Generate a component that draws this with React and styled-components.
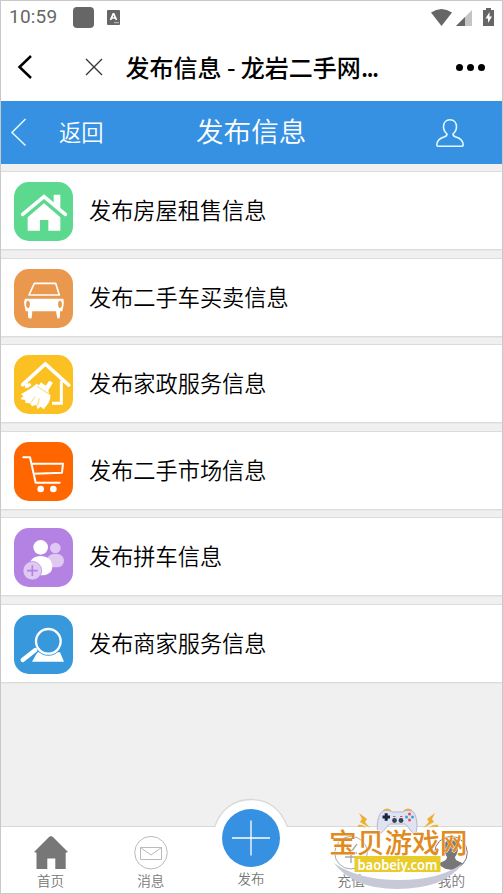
import React from "react";
import styled, { createGlobalStyle } from "styled-components";

const GlobalStyle = createGlobalStyle`
  * { box-sizing: border-box; }
  body {
    margin: 0;
    font-family: "Noto Sans CJK SC", sans-serif;
  }
  svg { display: block; flex: none; overflow: visible; }
`;

const Phone = styled.div`
  position: relative;
  display: flex;
  flex-direction: column;
  width: 503px;
  height: 894px;
  border: 1px solid #c9c9c9;
  background: #f0f0f0;
  overflow: hidden;
`;

const StatusBar = styled.div`
  display: flex;
  align-items: center;
  height: 32px;
  padding: 0 8px 0 8px;
  background: #fff;
  color: #666;
`;

const Clock = styled.span`
  width: 64px;
  font: 19px/32px Roboto, sans-serif;
  letter-spacing: 0.2px;
`;

const NoticeBlock = styled.span`
  width: 21px;
  height: 21px;
  margin-right: 13px;
  border-radius: 4px;
  background: #666;
`;

const StatusRight = styled.div`
  display: flex;
  align-items: center;
  margin-left: auto;
`;

const BrowserBar = styled.div`
  display: flex;
  align-items: center;
  height: 68px;
  padding: 1px 17px 1px 16px;
  background: #fff;
`;

const PageTitle = styled.div`
  width: 270px;
  margin-left: 23.5px;
  font-size: 24px;
  line-height: 66px;
  font-weight: 500;
  color: #000;
  white-space: nowrap;
`;

const Ellipsis = styled.span`
  letter-spacing: -1.6px;
`;

const Dots = styled.div`
  display: flex;
  gap: 4px;
  margin-left: auto;
`;

const Dot = styled.i`
  width: 7px;
  height: 7px;
  border-radius: 50%;
  background: #000;
`;

const Header = styled.header`
  display: grid;
  grid-template-columns: 58px 137px 1fr 66px;
  align-items: center;
  height: 63px;
  background: #3691e2;
  color: #fff;
`;

const Back = styled.span`
  padding-bottom: 4px;
  font-size: 22.3px;
  font-weight: 350;
`;

const HeaderTitle = styled.h1`
  margin: 0;
  padding-bottom: 4px;
  font-size: 27.6px;
  line-height: 59px;
  font-weight: 350;
`;

const List = styled.main`
  display: flex;
  flex-direction: column;
  gap: 7.6px;
  padding-top: 7px;
  flex: 1;
`;

const Row = styled.div`
  display: flex;
  align-items: flex-start;
  height: 79px;
  padding-left: 13px;
  border: solid #dcdcdc;
  border-width: 1px 0;
  box-shadow: 0 1px #e8e8e8;
  background: #fff;
`;

const RowIcon = styled.div`
  width: 59px;
  height: 59px;
  margin: 10px 16px 0 0;
  border-radius: 15px;
  background: ${(props) => props.$color};
`;

const RowText = styled.span`
  margin-top: 8px;
  font-size: 22.2px;
  line-height: 59px;
  font-weight: 350;
  color: #000;
`;

const TabBar = styled.nav`
  display: grid;
  grid-template-columns: repeat(5, 1fr);
  height: 67px;
  border-top: 1px solid #d8d8d8;
  background: #fff;
`;

const Tab = styled.div`
  display: flex;
  flex-direction: column;
  align-items: center;
  padding: 9px 1px 0 0;
`;

const TabText = styled.span`
  margin-top: ${(props) => props.$top || "0"};
  font-size: 13.6px;
  line-height: 20px;
  font-weight: 350;
  color: #777;
`;

const Publish = styled.div`
  margin-top: -37px;
  height: 70px;
`;

const Watermark = styled.svg`
  position: absolute;
  left: 319px;
  top: 799px;
`;

const HouseIcon = () => (
  <svg width="59" height="59" viewBox="0 0 177 177" fill="#fff">
    <path d="M119 38h20v43l-20-17z" />
    <path d="M26 97 90 44l64 53" fill="none" stroke="#fff" strokeWidth="11" strokeLinecap="round" />
    <path d="M41 146v-40l49-42 49 42v40h-36v-32H78v32z" />
  </svg>
);

const CarIcon = () => (
  <svg width="59" height="59" viewBox="0 0 177 177" fill="#fff">
    <path d="M61 43h64l11 35H45z" fill="none" stroke="#fff" strokeWidth="5" strokeLinejoin="round" />
    <path d="M33 89h115q2 8 1 18l-4 20h-7v17q-2 6-8 4l-4-21H55l-2 20q-6 4-11-2v-18h-7l-4-20q-2-10 2-18z" />
    <ellipse cx="42" cy="106" rx="5.5" ry="11" fill="#ea984e" />
    <ellipse cx="138" cy="106" rx="5.5" ry="11" fill="#ea984e" />
  </svg>
);

const CleanIcon = () => (
  <svg width="59" height="59" viewBox="0 0 177 177" fill="#fff">
    <path d="M26 89 94 27l70 63" fill="none" stroke="#fff" strokeWidth="11" strokeLinecap="round" />
    <path d="M37 80v18M37 96l13-9M142 77v68h-28" fill="none" stroke="#fff" strokeWidth="9" />
    <path d="m106 77 11 6-14 23 3 14q-11-10-20-12l-17-9 12-17 14 10z" />
    <path d="M68 86q-18 16-47 31l7 7-9 8 14 3 2 9 13 1 6 9 13-5 3 13 10-7 9 8 10-13q11-14 10-29L91 101z" />
    <path d="m69 94 36 23M63 125l-12 18M76 130l-5 22" fill="none" stroke="#fbc123" strokeWidth="2" />
  </svg>
);

const CartIcon = () => (
  <svg width="59" height="59" viewBox="0 0 177 177" fill="none" stroke="#fff" strokeWidth="6">
    <path d="M28 46h20l17 76h72M54 65h93l-3 27-84 3" strokeLinecap="round" strokeLinejoin="round" />
    <circle cx="80" cy="141" r="10" fill="#fff" stroke="none" />
    <circle cx="118" cy="141" r="10" fill="#fff" stroke="none" />
  </svg>
);

const CarpoolIcon = () => (
  <svg width="59" height="59" viewBox="0 0 177 177" fill="#fff">
    <g fill="#dfc9f3">
      <circle cx="124" cy="60" r="16" />
      <rect x="99" y="78" width="51" height="40" rx="20" />
    </g>
    <circle cx="80" cy="58" r="22" />
    <path d="M80 84c-20 0-34 12-34 32 0 18 14 26 34 26s35-8 35-26c0-20-15-32-35-32z" />
    <circle cx="55" cy="128" r="28" fill="#dfc9f3" stroke="#b382e3" strokeWidth="2" />
    <path d="M39 128h32M55 112v32" fill="none" stroke="#b382e3" strokeWidth="5" />
  </svg>
);

const SearchIcon = () => (
  <svg width="59" height="59" viewBox="0 0 177 177" fill="#fff">
    <path d="M70 112h68l12 28H54z" />
    <circle cx="103" cy="79" r="43" fill="#3798dc" />
    <circle cx="103" cy="79" r="37" fill="none" stroke="#fff" strokeWidth="7" />
    <path d="m65 105-41 30" fill="none" stroke="#3798dc" strokeWidth="20" />
    <path d="m64 105-38 30" fill="none" stroke="#fff" strokeWidth="13" strokeLinecap="round" />
  </svg>
);

const items = [
  { text: "发布房屋租售信息", color: "#5cd88f", Icon: HouseIcon },
  { text: "发布二手车买卖信息", color: "#ea984e", Icon: CarIcon },
  { text: "发布家政服务信息", color: "#fbc123", Icon: CleanIcon },
  { text: "发布二手市场信息", color: "#ff6600", Icon: CartIcon },
  { text: "发布拼车信息", color: "#b382e3", Icon: CarpoolIcon },
  { text: "发布商家服务信息", color: "#3798dc", Icon: SearchIcon },
];

const HomeTab = () => (
  <svg width="34" height="34" viewBox="0 0 34 34">
    <path d="M15 1 17 0l2 1L34 16l-2.3.7V33H21.3V22.5h-8V33H2.5V16.7L0 16z" fill="#777" />
  </svg>
);

const MessageTab = () => (
  <svg width="34" height="34" viewBox="0 0 34 34" fill="none" stroke="#bbb">
    <circle cx="17" cy="16.7" r="16.3" />
    <path d="M6.5 11.5h21v12h-21zL17 19l10.5-7.5" />
  </svg>
);

const PublishTab = () => (
  <svg width="74" height="70" viewBox="0 0 74 70">
    <path d="M.7 28.5C7 10 20 .5 37 .5s30 9.5 36.3 28z" fill="#fff" />
    <path d="M.7 27.5C7 10 20 .5 37 .5s30 9.5 36.3 27" fill="none" stroke="#d8d8d8" strokeWidth="1.3" />
    <circle cx="37" cy="39" r="29" fill="#3691e2" />
    <path d="M18 39h38M37 21.5v35" stroke="#fff" strokeWidth="1.3" />
  </svg>
);

const RechargeTab = () => (
  <svg width="34" height="34" viewBox="0 0 34 34" fill="none" stroke="#aaa">
    <circle cx="17" cy="16.7" r="16.3" />
    <path d="m11 8 6 8 6-8M17 16v11M11 17h12M11 21h12" strokeWidth="1.4" />
  </svg>
);

const MineTab = () => (
  <svg width="34" height="34" viewBox="0 0 34 34">
    <circle cx="17" cy="16.7" r="16.3" fill="#fff" stroke="#777" />
    <path d="M17 4c-6 0-8 4-7 9 .5 4 2 6 3 8-.2 4-4 4-8.5 6.5a16 16 0 0 0 25 0C25 25 21 25 21 21c2-3 3-5 3-9 .3-5-2-8-7-8z" fill="#777" />
  </svg>
);

const Logo = () => (
  <Watermark width="160" height="95" viewBox="0 0 160 95">
    <path d="M14 63Q33 89 77 89q48 0 66-26-22 17-64 17-41 0-65-17z" fill="#c7c9d6" />
    <g fill="#eeae32">
      <path d="m39 13 8 6-2 3 5 6-10-6 2-3zM38 25q5-1 8 3-4-2-8-1zM115 13l-8 6 2 3-6 6 11-6-2-3zM118 25q-5-1-9 3 4-2 9-1z" />
      <path d="M63 10q4-3 8 0v3h-8zM84 10q4-3 8 0v3h-8z" />
    </g>
    <path d="M63 11q5-2 10 1h9q5-3 10-1c5 2 6 17 4 22-5 2-7-7-11-9H70c-4 2-7 11-12 9-2-6 0-20 5-22z" fill="#dfe2f0" stroke="#a9abc2" strokeWidth=".8" />
    <path d="M62.500 17h7.500M66.200 13.200v7.500" stroke="#17263d" strokeWidth="3" />
    <g fill="#3aa2cf">
      <circle cx="86.5" cy="17" r="1.5" />
      <circle cx="92.5" cy="17" r="1.5" />
    </g>
    <g fill="#e1525c">
      <circle cx="89.5" cy="14" r="1.5" />
      <circle cx="89.5" cy="20" r="1.5" />
    </g>
    <circle cx="74.5" cy="20.5" r="2.4" fill="#33435d" />
    <circle cx="81" cy="20.5" r="2.4" fill="#33435d" />
    <path d="M73 16.5h2.5M80 16.5h2.5" stroke="#e1525c" />
    <text x="9" y="53" fontSize="27.7" fontWeight="500" fill="#e18a20" stroke="#fff" strokeWidth=".8" paintOrder="stroke" fontFamily="Noto Sans CJK SC, sans-serif">宝贝游戏网</text>
    <path d="M34.5 56h86v16h-86z" fill="#e8cc2b" />
    <text x="37.5" y="69.500" fontSize="14.500" fontWeight="600" fill="#fff" textLength="80" lengthAdjust="spacingAndGlyphs" fontFamily="Noto Sans, sans-serif">baobeiy.com</text>
  </Watermark>
);

const App = () => (
  <>
    <GlobalStyle />
    <Phone>
      <StatusBar>
        <Clock>10:59</Clock>
        <NoticeBlock />
        <svg width="13" height="15" viewBox="0 0 13 15">
          <rect width="13" height="15" rx="1" fill="#666" />
          <path d="M3.5 10 6.2 3.8h.6L9.5 10M4.6 8h3.8" fill="none" stroke="#fff" strokeWidth="1.7" />
          <path d="M7 12.7h5" stroke="#ddd" strokeWidth=".8" />
        </svg>
        <StatusRight>
          <svg width="63" height="19" viewBox="0 0 63 19" fill="#666">
            <path d="M0 4.5Q10.5-2.5 21 4.5L10.5 18z" />
            <path d="M41 2v16H25z" fill="#c4c4c4" />
            <path d="M34 9v9h-9z" />
            <path d="M55 2V0h5v2h3v16H52V2z" />
            <path d="m58.5 4-4 6.5h2.5V15l4-6.5h-2.5z" fill="#fff" />
          </svg>
        </StatusRight>
      </StatusBar>
      <BrowserBar>
        <svg width="15" height="24" viewBox="0 0 15 24" fill="none" stroke="#000" strokeWidth="2.5">
          <path d="M14 1 2.5 12 14 23" />
        </svg>
        <svg width="16" height="16" viewBox="0 0 16 16" style={{ marginLeft: 54 }} stroke="#333" strokeWidth="1.3">
          <path d="m0 0 16 16M16 0 0 16" />
        </svg>
        <PageTitle>发布信息 - 龙岩二手网<Ellipsis>...</Ellipsis></PageTitle>
        <Dots><Dot /><Dot /><Dot /></Dots>
      </BrowserBar>
      <Header>
        <svg width="26" height="28" viewBox="0 0 26 28" fill="none" stroke="#e4fbff" strokeWidth="1.5">
          <path d="M24.5 0 11 13.5 24.500 26.500" />
        </svg>
        <Back>返回</Back>
        <HeaderTitle>发布信息</HeaderTitle>
        <svg width="28" height="28" viewBox="0 0 28 28" fill="none" stroke="#e4fbff" strokeWidth="1.6">
          <path d="M14 .8c-4 0-6.5 3-6.5 7 0 3 1.5 5.5 3.5 7.2 0 2-1 2.5-3 3C3.5 19.3 1 21 .8 26q0 1.2 1.2 1.2h24q1.2 0 1.2-1.2C27 21 24.5 19.3 20 18c-2-.5-3-1-3-3 2-1.7 3.5-4.2 3.5-7.2 0-4-2.5-7-6.5-7z" />
        </svg>
      </Header>
      <List>
        {items.map(({ text, color, Icon }) => (
          <Row key={text}>
            <RowIcon $color={color}><Icon /></RowIcon>
            <RowText>{text}</RowText>
          </Row>
        ))}
      </List>
      <TabBar>
        <Tab><HomeTab /><TabText>首页</TabText></Tab>
        <Tab><MessageTab /><TabText>消息</TabText></Tab>
        <Tab><Publish><PublishTab /></Publish><TabText $top="-1px">发布</TabText></Tab>
        <Tab><RechargeTab /><TabText>充值</TabText></Tab>
        <Tab><MineTab /><TabText>我的</TabText></Tab>
      </TabBar>
      <Logo />
    </Phone>
  </>
);

export default App;
